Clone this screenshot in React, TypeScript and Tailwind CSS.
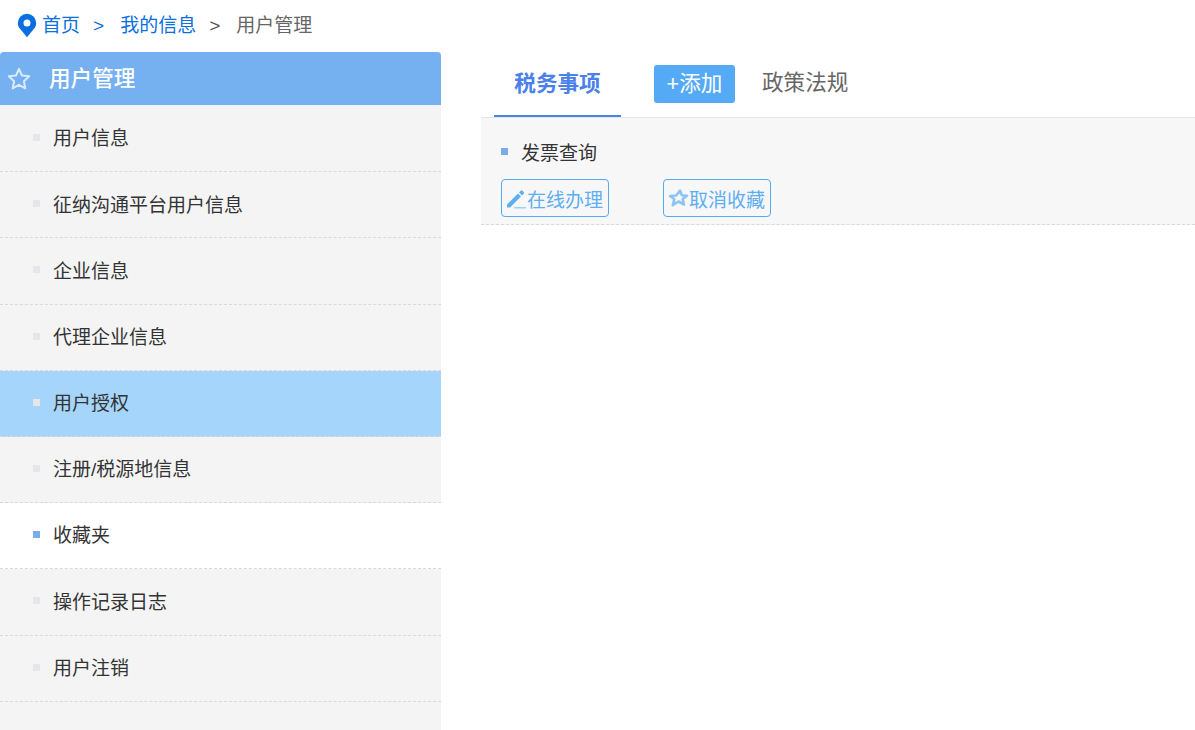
const fontStack = { fontFamily: '"Liberation Sans", "Noto Sans CJK SC", sans-serif' };

const menuItems = [
  { label: '用户信息' },
  { label: '征纳沟通平台用户信息' },
  { label: '企业信息' },
  { label: '代理企业信息' },
  { label: '用户授权', hover: true },
  { label: '注册/税源地信息' },
  { label: '收藏夹', active: true },
  { label: '操作记录日志' },
  { label: '用户注销' },
];

const PinIcon = () => (
  <svg className="w-[20px] h-[25px] shrink-0 -mt-[2px]" viewBox="0 0 20 25">
    <path
      fill="#0a6fe0"
      fillRule="evenodd"
      d="M10 .8a9.200 9.200 0 0 0-9.200 9.200c0 2.500 1 4.500 2.700 6.300L10 24.200l6.500-7.900c1.700-1.800 2.700-3.800 2.700-6.300A9.200 9.200 0 0 0 10 .8zm0 5.700a3.500 3.500 0 1 1 0 7 3.500 3.500 0 0 1 0-7z"
    />
  </svg>
);

const StarIcon = () => (
  <svg className="w-[24px] h-[24px] shrink-0" viewBox="0 0 24 24" fill="none">
    <path
      stroke="#dbeafe"
      strokeWidth="2"
      strokeLinejoin="round"
      d="M12 1.800l3 6.700 7.200.8-5.300 4.900 1.400 7.200-6.300-3.600-6.300 3.600 1.400-7.200-5.300-4.900 7.200-.8z"
    />
  </svg>
);

const PencilIcon = () => (
  <svg className="w-[22px] h-[22px] shrink-0" viewBox="0 0 22 22">
    <path fill="#5eb0f3" d="M2 17.500 13 6.500l3 3L5 20.500H2z" />
    <path fill="#5eb0f3" d="M14 5.500l1.700-1.700a1.300 1.300 0 0 1 1.800 0l1.200 1.200a1.300 1.300 0 0 1 0 1.800L17 8.500z" />
    <rect x="9" y="20" width="12" height="1.500" fill="#9fd0f7" />
  </svg>
);

const StarEditIcon = () => (
  <svg className="w-[22px] h-[22px] shrink-0" viewBox="0 0 22 22" fill="none">
    <path
      stroke="#8cc5f5"
      strokeWidth="2.600"
      strokeLinejoin="round"
      d="M13 3.500l1.800 4.700 5.200.5-4.300 3.300 1.300 5.500-5.400-3-5.800 3.700 1.600-6L3 9l6.200-.5z"
    />
  </svg>
);

const ActionButton = ({ icon, label }: { icon: React.ReactNode; label: string }) => (
  <button className="h-[38px] w-[108px] flex items-center pl-[3px] rounded-[4px] border border-[#55aaf5] text-[19px] text-[#60aef2]">
    {icon}
    <span className="leading-none whitespace-nowrap mt-[4px]">{label}</span>
  </button>
);

export default function App() {
  return (
    <div className="w-[1195px] h-[730px] bg-white overflow-hidden" style={fontStack}>
      <div className="h-[52px] flex items-center pl-[17px] text-[19px] text-[#0a6fe0]">
        <PinIcon />
        <span className="ml-[5px]">首页</span>
        <span className="ml-[13px]">&gt;</span>
        <span className="ml-[16px]">我的信息</span>
        <span className="ml-[13px] text-[#555555]">&gt;</span>
        <span className="ml-[16px] text-[#666666]">用户管理</span>
      </div>

      <div className="flex">
        <div className="w-[441px] h-[678px] bg-[#f4f4f4] shrink-0">
          <div className="h-[53px] flex items-center pl-[7px] rounded-t-[4px] bg-[#75b0f0] text-white text-[21.6px] font-medium">
            <StarIcon />
            <span className="ml-[18px] mt-[2px]">用户管理</span>
          </div>
          <div className="pt-[1px]">
            {menuItems.map((item) => (
              <div
                key={item.label}
                className={`h-[66.2px] flex items-center pl-[33px] border-b border-dashed border-[#d9d9d9] text-[19px] text-[#333333] ${
                  item.hover ? 'bg-[#a6d5fb]' : item.active ? 'bg-white' : ''
                }`}
              >
                <span className={`w-[7px] h-[7px] shrink-0 -mt-[2px] ${item.active ? 'bg-[#75aeea]' : 'bg-[#e4e6ea]'}`} />
                <span className="ml-[13px] mt-[2px]">{item.label}</span>
              </div>
            ))}
          </div>
        </div>

        <div className="ml-[40px] flex-1">
          <div className="h-[66px] flex border-b border-[#e4e4e4]">
            <div className="ml-[13px] w-[127px] h-[65px] flex items-center justify-center pt-[2px] border-b-[2px] border-[#4785ea] text-[21.6px] font-bold text-[#4a80ea]">
              税务事项
            </div>
            <div className="ml-[33px] mt-[13px] w-[81px] h-[38px] flex items-center justify-center rounded-[3px] bg-[#55aaf5] text-[21.6px] text-white">
              +添加
            </div>
            <div className="ml-[27px] h-[62px] flex items-center text-[21.6px] text-[#666666]">政策法规</div>
          </div>

          <div className="h-[107px] bg-[#f7f7f7] border-b border-dashed border-[#d9d9d9] pl-[20px] pt-[19px]">
            <div className="h-[30px] flex items-center text-[19px] text-[#333333]">
              <span className="w-[7px] h-[7px] -mt-[1px] bg-[#75aeea]" />
              <span className="ml-[13px] mt-[4px]">发票查询</span>
            </div>
            <div className="mt-[12px] flex gap-[54px]">
              <ActionButton icon={<PencilIcon />} label="在线办理" />
              <ActionButton icon={<StarEditIcon />} label="取消收藏" />
            </div>
          </div>
        </div>
      </div>
    </div>
  );
}
